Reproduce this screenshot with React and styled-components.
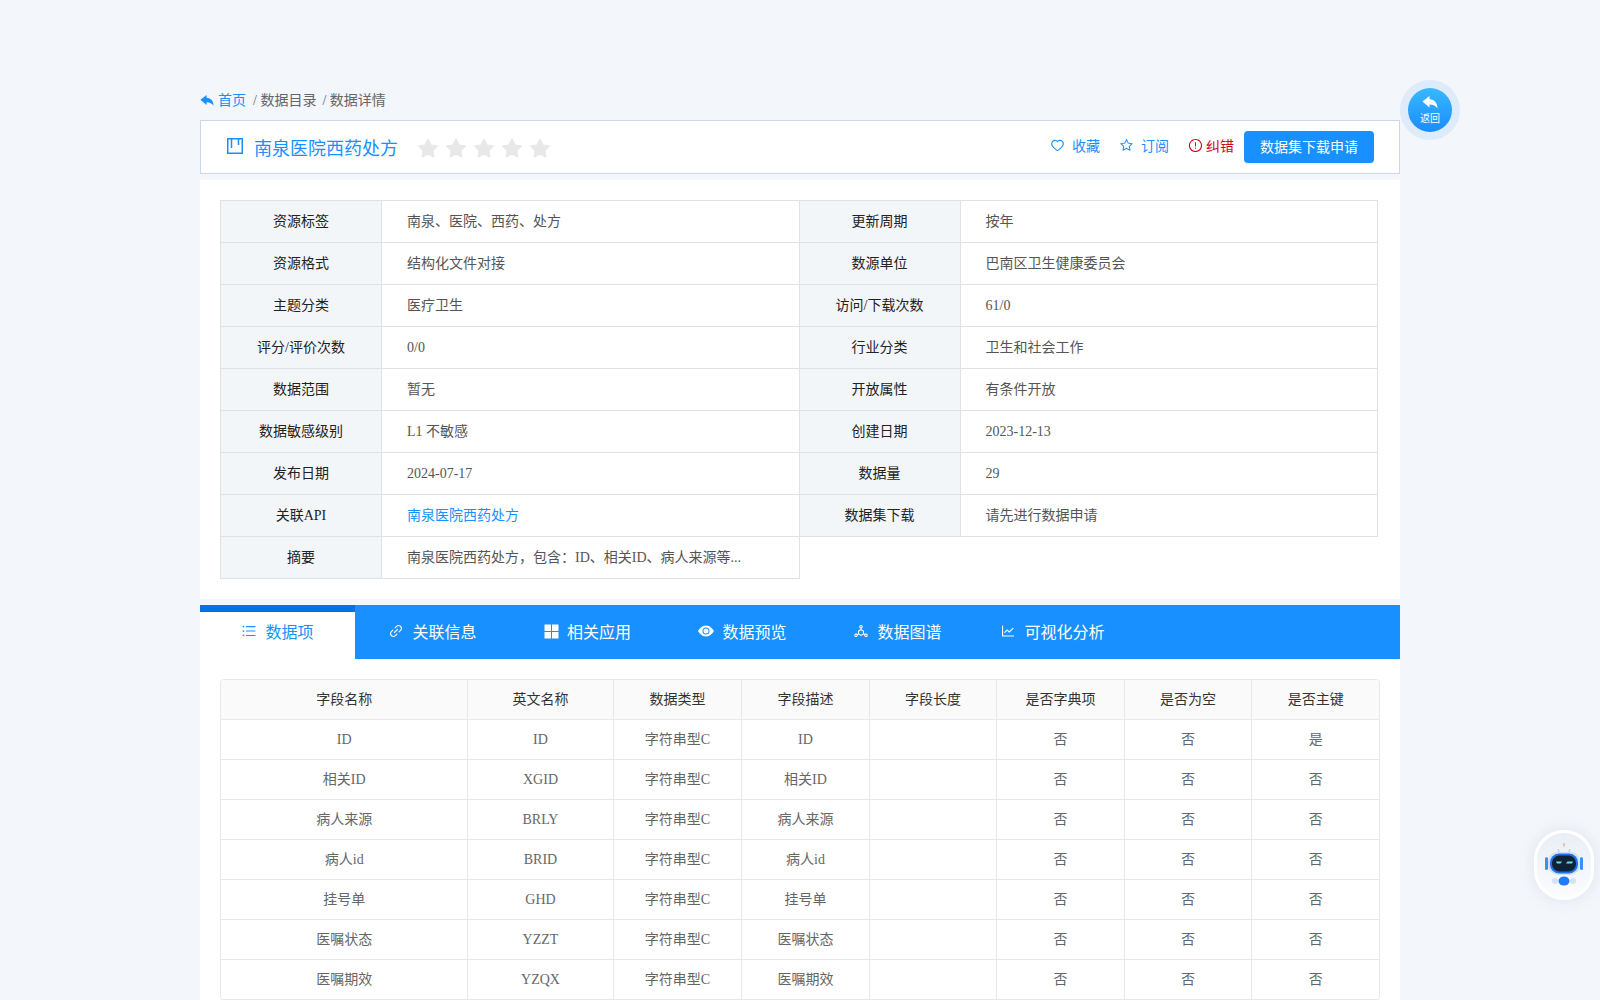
import React from "react";
import styled, { createGlobalStyle } from "styled-components";
import {
  AiFillStar,
  AiOutlineDeploymentUnit,
  AiOutlineExclamationCircle,
  AiOutlineHeart,
  AiOutlineLineChart,
  AiOutlineLink,
  AiOutlineStar,
  AiOutlineUnorderedList,
} from "react-icons/ai";
import { BsEyeFill } from "react-icons/bs";

const GlobalStyle = createGlobalStyle`
  html, body {
    margin: 0;
    padding: 0;
    height: 1000px;
    overflow: hidden;
    background: #f3f6fa;
    font-family: "Liberation Serif", "Noto Sans CJK SC", serif;
    font-size: 14px;
    color: #666;
  }
`;

const Page = styled.div`
  width: 1200px;
  margin: 0 auto;
  padding-top: 91px;
`;

const Crumbs = styled.div`
  height: 29px;
  line-height: 20px;
  display: flex;
  align-items: flex-start;
  color: #666;
`;

const CrumbHome = styled.a`
  display: flex;
  align-items: center;
  gap: 4px;
  color: #1890ff;
  height: 20px;
`;

const CrumbItem = styled.span`
  margin-left: ${(props) => props.$gap}px;
`;

const TitleBar = styled.div`
  height: 54px;
  box-sizing: border-box;
  border: 1px solid #ccd9e8;
  background: #fff;
  padding: 0 25px;
  display: flex;
  align-items: center;
  justify-content: space-between;
`;

const TitleLeft = styled.div`
  display: flex;
  align-items: center;
`;

const TitleIconBox = styled.span`
  display: flex;
  color: #1890ff;
  margin-right: 11px;
  margin-left: 1px;
  margin-top: -2px;
`;

const TitleText = styled.h1`
  margin: 0;
  font-size: 18px;
  font-weight: 400;
  color: #1890ff;
`;

const Stars = styled.div`
  display: flex;
  gap: 4px;
  margin-left: 18px;
  margin-top: 3px;
  color: #e8e8e8;
  font-size: 24px;
`;

const Actions = styled.div`
  display: flex;
  align-items: center;
`;

const Action = styled.a`
  display: flex;
  align-items: center;
  gap: 7px;
  margin-right: 19px;
  margin-top: -4px;
  color: #1890ff;
  svg {
    font-size: 15px;
  }
`;

const ErrorAction = styled(Action)`
  gap: 3px;
  margin-right: 10px;
  color: #d0021b;
`;

const ApplyButton = styled.button`
  width: 130px;
  height: 32px;
  padding: 0 0 2px;
  border: 0;
  border-radius: 4px;
  background: #1890ff;
  color: #fff;
  font: inherit;
  box-shadow: 0 2px 0 rgba(0, 0, 0, 0.03);
`;

const InfoPanel = styled.section`
  margin-top: 6px;
  height: 419px;
  box-sizing: border-box;
  background: #fff;
  padding: 20px;
`;

const InfoTable = styled.table`
  width: 1158px;
  table-layout: fixed;
  border-collapse: collapse;
  line-height: 20px;
`;

const InfoLabel = styled.th`
  width: 161px;
  height: 42px;
  box-sizing: border-box;
  padding: 0;
  border: 1px solid #dfe1e4;
  background: #f3f6f9;
  color: #222;
  font-weight: 400;
`;

const InfoValue = styled.td`
  height: 42px;
  box-sizing: border-box;
  padding: 0 25px;
  border: 1px solid #dfe1e4;
  color: #555;
`;

const InfoLink = styled.a`
  color: #1890ff;
`;

const TabBar = styled.nav`
  margin-top: 6px;
  height: 54px;
  background: #1890ff;
  display: flex;
`;

const Tab = styled.a`
  position: relative;
  width: 155px;
  box-sizing: border-box;
  padding-bottom: 2px;
  display: flex;
  align-items: center;
  justify-content: center;
  gap: 8px;
  font-size: 16px;
  color: ${(props) => (props.$active ? "#1890ff" : "#fff")};
  background: ${(props) => (props.$active ? "#fff" : "transparent")};
  svg {
    font-size: 16px;
  }
  &::before {
    content: "";
    display: ${(props) => (props.$active ? "block" : "none")};
    position: absolute;
    top: 0;
    left: 0;
    right: 0;
    height: 7px;
    background: #0073e0;
  }
`;

const ItemsPanel = styled.section`
  background: #fff;
  padding: 20px;
  height: 400px;
  box-sizing: border-box;
`;

const ItemsWrap = styled.div`
  width: 1160px;
  border: 1px solid #e8e8e8;
  border-radius: 4px;
  box-sizing: border-box;
  overflow: hidden;
`;

const ItemsTable = styled.table`
  width: 100%;
  table-layout: fixed;
  border-collapse: collapse;
  line-height: 20px;
  text-align: center;
`;

const HeadCell = styled.th`
  height: 39px;
  box-sizing: border-box;
  padding: 2px 0 0 1px;
  background: #fafafa;
  border-right: 1px solid #e8e8e8;
  border-bottom: 1px solid #e8e8e8;
  color: #333;
  font-weight: 400;
  &:last-child {
    border-right: 0;
  }
`;

const Cell = styled.td`
  height: 40px;
  box-sizing: border-box;
  padding: 2px 0 0 1px;
  border-right: 1px solid #e8e8e8;
  border-bottom: 1px solid #e8e8e8;
  color: #666;
  &:last-child {
    border-right: 0;
  }
`;

const BackButton = styled.a`
  position: fixed;
  left: 1400px;
  top: 80px;
  width: 60px;
  height: 60px;
  box-sizing: border-box;
  border-radius: 50%;
  background: #deebfa;
  display: flex;
  align-items: center;
  justify-content: center;
`;

const BackInner = styled.div`
  width: 44px;
  height: 44px;
  border-radius: 50%;
  background: linear-gradient(180deg, #38b8ff, #1a8cff);
  color: #fff;
  display: flex;
  flex-direction: column;
  align-items: center;
  padding-top: 7px;
  box-sizing: border-box;
  font-size: 10px;
  line-height: 15px;
`;

const RobotButton = styled.div`
  position: fixed;
  left: 1534px;
  top: 830px;
  width: 60px;
  height: 70px;
  border-radius: 30px;
  background: linear-gradient(180deg, #e9eef6, #fbfcfe);
  border: 3px solid #fff;
  box-sizing: border-box;
  box-shadow: 0 0 14px rgba(160, 180, 210, 0.25);
  display: flex;
  align-items: center;
  justify-content: center;
`;

const infoRows = [
  ["资源标签", "南泉、医院、西药、处方", "更新周期", "按年"],
  ["资源格式", "结构化文件对接", "数源单位", "巴南区卫生健康委员会"],
  ["主题分类", "医疗卫生", "访问/下载次数", "61/0"],
  ["评分/评价次数", "0/0", "行业分类", "卫生和社会工作"],
  ["数据范围", "暂无", "开放属性", "有条件开放"],
  ["数据敏感级别", "L1 不敏感", "创建日期", "2023-12-13"],
  ["发布日期", "2024-07-17", "数据量", "29"],
];

const ReplyIcon = ({ size }) => (
  <svg width={size} height={size} viewBox="0 0 16 16" fill="currentColor">
    <path d="M0.5 6.5 L7.5 1 V4.2 C12.5 4.4 15.5 8 15.5 13.5 C13.8 10.8 11.5 9.4 7.5 9.4 V12.5 Z" />
  </svg>
);

const BoardIcon = () => (
  <svg width="16" height="16" viewBox="0 0 16 16" fill="none" stroke="currentColor">
    <rect x="0.75" y="0.75" width="14.5" height="14.5" strokeWidth="1.5" />
    <path d="M4.5 1v9M11.5 1v6" strokeWidth="1.5" />
  </svg>
);

const TilesIcon = () => (
  <svg width="15" height="15" viewBox="0 0 15 15" fill="currentColor">
    <rect x="0.5" y="0.5" width="6.5" height="6.5" />
    <rect x="8" y="0.5" width="6.5" height="6.5" />
    <rect x="0.5" y="8" width="6.5" height="6.5" />
    <rect x="8" y="8" width="6.5" height="6.5" />
  </svg>
);

const tabs = [
  [AiOutlineUnorderedList, "数据项"],
  [AiOutlineLink, "关联信息"],
  [TilesIcon, "相关应用"],
  [BsEyeFill, "数据预览"],
  [AiOutlineDeploymentUnit, "数据图谱"],
  [AiOutlineLineChart, "可视化分析"],
];

const columns = [
  ["字段名称", 246],
  ["英文名称", 146],
  ["数据类型", 128],
  ["字段描述", 128],
  ["字段长度", 127],
  ["是否字典项", 128],
  ["是否为空", 127],
  ["是否主键", 128],
];

const fields = [
  ["ID", "ID", "是"],
  ["相关ID", "XGID", "否"],
  ["病人来源", "BRLY", "否"],
  ["病人id", "BRID", "否"],
  ["挂号单", "GHD", "否"],
  ["医嘱状态", "YZZT", "否"],
  ["医嘱期效", "YZQX", "否"],
];

const Robot = () => (
  <svg width="40" height="44" viewBox="0 0 40 44">
    <rect x="19.3" y="0" width="1.4" height="3.5" fill="#f0a9a0" />
    <path d="M14 6l2 5M26 6l-2 5" stroke="#9cc4ee" strokeWidth="1" fill="none" />
    <rect x="1" y="14" width="3" height="13" rx="1.5" fill="#3f8ff0" />
    <rect x="36" y="14" width="3" height="13" rx="1.5" fill="#3f8ff0" />
    <rect x="4" y="9" width="32" height="23" rx="10" fill="#cfe0f5" />
    <rect x="6" y="10.5" width="28" height="20" rx="9" fill="#1d73e8" />
    <rect x="8" y="12.5" width="24" height="16" rx="7.5" fill="#102238" />
    <path d="M12 18.5h6l-1.5 2H13zM22 20.5l1.5-2H29l-1 2z" fill="#63e0dc" />
    <ellipse cx="20" cy="38" rx="5.5" ry="4.5" fill="#1f7cf2" />
    <circle cx="11" cy="38" r="3" fill="#d5e3f7" />
    <circle cx="29" cy="38" r="3" fill="#d5e3f7" />
  </svg>
);

const App = () => (
  <>
    <GlobalStyle />
    <Page>
      <Crumbs>
        <CrumbHome>
          <ReplyIcon size={14} />
          首页
        </CrumbHome>
        <CrumbItem $gap={7}>/ 数据目录</CrumbItem>
        <CrumbItem $gap={6}>/ 数据详情</CrumbItem>
      </Crumbs>
      <TitleBar>
        <TitleLeft>
          <TitleIconBox>
            <BoardIcon />
          </TitleIconBox>
          <TitleText>南泉医院西药处方</TitleText>
          <Stars>
            {[0, 1, 2, 3, 4].map((i) => (
              <AiFillStar key={i} />
            ))}
          </Stars>
        </TitleLeft>
        <Actions>
          <Action>
            <AiOutlineHeart />
            收藏
          </Action>
          <Action>
            <AiOutlineStar />
            订阅
          </Action>
          <ErrorAction>
            <AiOutlineExclamationCircle />
            纠错
          </ErrorAction>
          <ApplyButton>数据集下载申请</ApplyButton>
        </Actions>
      </TitleBar>
      <InfoPanel>
        <InfoTable>
          <tbody>
            {infoRows.map((row) => (
              <tr key={row[0]}>
                <InfoLabel>{row[0]}</InfoLabel>
                <InfoValue>{row[1]}</InfoValue>
                <InfoLabel>{row[2]}</InfoLabel>
                <InfoValue>{row[3]}</InfoValue>
              </tr>
            ))}
            <tr>
              <InfoLabel>关联API</InfoLabel>
              <InfoValue>
                <InfoLink>南泉医院西药处方</InfoLink>
              </InfoValue>
              <InfoLabel>数据集下载</InfoLabel>
              <InfoValue>请先进行数据申请</InfoValue>
            </tr>
            <tr>
              <InfoLabel>摘要</InfoLabel>
              <InfoValue>南泉医院西药处方，包含：ID、相关ID、病人来源等...</InfoValue>
            </tr>
          </tbody>
        </InfoTable>
      </InfoPanel>
      <TabBar>
        {tabs.map(([Icon, label], i) => (
          <Tab key={label} $active={i === 0}>
            <Icon />
            {label}
          </Tab>
        ))}
      </TabBar>
      <ItemsPanel>
        <ItemsWrap>
          <ItemsTable>
            <colgroup>
              {columns.map(([name, width]) => (
                <col key={name} width={width} />
              ))}
            </colgroup>
            <thead>
              <tr>
                {columns.map(([name]) => (
                  <HeadCell key={name}>{name}</HeadCell>
                ))}
              </tr>
            </thead>
            <tbody>
              {fields.map(([name, code, key]) => (
                <tr key={code}>
                  <Cell>{name}</Cell>
                  <Cell>{code}</Cell>
                  <Cell>字符串型C</Cell>
                  <Cell>{name}</Cell>
                  <Cell></Cell>
                  <Cell>否</Cell>
                  <Cell>否</Cell>
                  <Cell>{key}</Cell>
                </tr>
              ))}
            </tbody>
          </ItemsTable>
        </ItemsWrap>
      </ItemsPanel>
    </Page>
    <BackButton>
      <BackInner>
        <ReplyIcon size={16} />
        返回
      </BackInner>
    </BackButton>
    <RobotButton>
      <Robot />
    </RobotButton>
  </>
);

export default App;
